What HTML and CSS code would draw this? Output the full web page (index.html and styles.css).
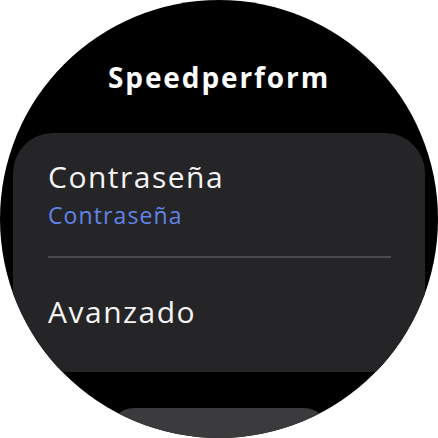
FILE: index.html
```html
<!DOCTYPE html>
<html>
<head>
<meta charset="utf-8">
<link rel="stylesheet" href="styles.css">
</head>
<body>
<div class="watch">
  <div class="title">Speedperform</div>
  <div class="card">
    <div class="item-title">Contraseña</div>
    <div class="item-sub">Contraseña</div>
    <div class="divider"></div>
    <div class="item-title second">Avanzado</div>
  </div>
  <div class="button"></div>
</div>
</body>
</html>
```
FILE: styles.css
```css
html, body {
  margin: 0;
  padding: 0;
  background: #ffffff;
}
body {
  width: 438px;
  height: 438px;
  overflow: hidden;
  font-family: "Open Sans", Roboto, sans-serif;
}
.watch {
  width: 438px;
  height: 438px;
  border-radius: 50%;
  background: #000000;
  overflow: hidden;
  display: flex;
  flex-direction: column;
  align-items: center;
}
.title {
  margin-top: 59px;
  height: 36px;
  line-height: 36px;
  font-size: 28px;
  font-weight: 700;
  letter-spacing: 1.9px;
  color: #ffffff;
  text-align: center;
}
.card {
  margin-top: 38px;
  width: 412px;
  height: 239px;
  flex-shrink: 0;
  box-sizing: border-box;
  background: #252527;
  border-radius: 40px 40px 0 0;
  padding: 26px 34px 0 35px;
}
.item-title {
  font-size: 30px;
  line-height: 36px;
  letter-spacing: 1.5px;
  color: #f4f4f4;
}
.item-sub {
  margin-top: 6px;
  font-size: 23px;
  line-height: 28px;
  letter-spacing: 1.1px;
  color: #6283ea;
}
.divider {
  margin-top: 27px;
  height: 2px;
  background: #4b4b4e;
}
.second {
  margin-top: 36px;
}
.button {
  margin-top: 36px;
  width: 218px;
  height: 60px;
  flex-shrink: 0;
  background: #3b3b3d;
  border-radius: 24px;
}
```
